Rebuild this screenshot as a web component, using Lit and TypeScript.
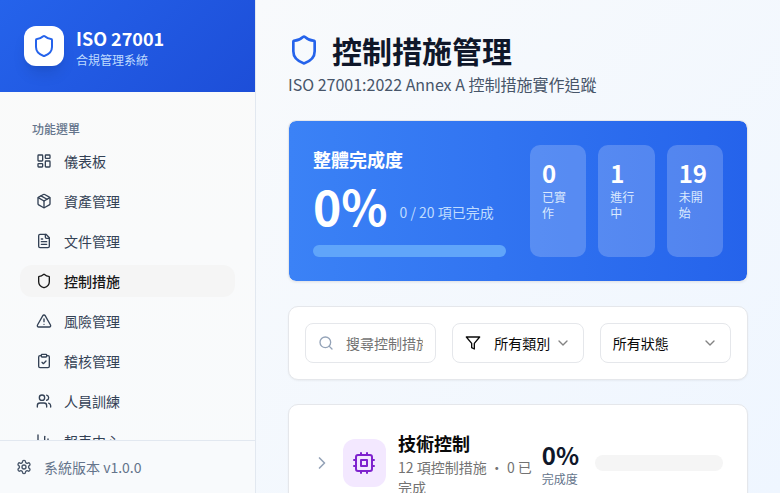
import { LitElement, html, css, svg } from "lit";
import { customElement } from "lit/decorators.js";

const ICONS: Record<string, unknown> = {
  shield: svg`<path d="M20 13c0 5-3.5 7.5-7.66 8.95a1 1 0 0 1-.67-.01C7.5 20.5 4 18 4 13V6a1 1 0 0 1 1-1c2 0 4.5-1.2 6.24-2.72a1.17 1.17 0 0 1 1.52 0C14.51 3.81 17 5 19 5a1 1 0 0 1 1 1z"/>`,
  dashboard: svg`<rect x="3" y="3" width="7" height="9" rx="1"/><rect x="14" y="3" width="7" height="5" rx="1"/><rect x="14" y="12" width="7" height="9" rx="1"/><rect x="3" y="16" width="7" height="5" rx="1"/>`,
  package: svg`<path d="M11 21.73a2 2 0 0 0 2 0l7-4A2 2 0 0 0 21 16V8a2 2 0 0 0-1-1.73l-7-4a2 2 0 0 0-2 0l-7 4A2 2 0 0 0 3 8v8a2 2 0 0 0 1 1.73z"/><path d="M12 22V12"/><path d="M3.3 7 12 12l8.7-5"/><path d="m7.5 4.27 9 5.15"/>`,
  file: svg`<path d="M15 2H6a2 2 0 0 0-2 2v16a2 2 0 0 0 2 2h12a2 2 0 0 0 2-2V7Z"/><path d="M14 2v4a2 2 0 0 0 2 2h4"/><path d="M10 9H8"/><path d="M16 13H8"/><path d="M16 17H8"/>`,
  alert: svg`<path d="m21.73 18-8-14a2 2 0 0 0-3.48 0l-8 14A2 2 0 0 0 4 21h16a2 2 0 0 0 1.73-3"/><path d="M12 9v4"/><path d="M12 17h.01"/>`,
  clipboard: svg`<rect x="8" y="2" width="8" height="4" rx="1"/><path d="M16 4h2a2 2 0 0 1 2 2v14a2 2 0 0 1-2 2H6a2 2 0 0 1-2-2V6a2 2 0 0 1 2-2h2"/><path d="m9 14 2 2 4-4"/>`,
  users: svg`<path d="M16 21v-2a4 4 0 0 0-4-4H6a4 4 0 0 0-4 4v2"/><circle cx="9" cy="7" r="4"/><path d="M22 21v-2a4 4 0 0 0-3-3.87"/><path d="M16 3.13a4 4 0 0 1 0 7.75"/>`,
  chart: svg`<path d="M3 3v18h18"/><path d="M18 17V9"/><path d="M13 17V5"/><path d="M8 17v-3"/>`,
  gear: svg`<path d="M12.22 2h-.44a2 2 0 0 0-2 2v.18a2 2 0 0 1-1 1.73l-.43.25a2 2 0 0 1-2 0l-.15-.08a2 2 0 0 0-2.73.73l-.22.38a2 2 0 0 0 .73 2.73l.15.1a2 2 0 0 1 1 1.72v.51a2 2 0 0 1-1 1.74l-.15.09a2 2 0 0 0-.73 2.73l.22.38a2 2 0 0 0 2.73.73l.15-.08a2 2 0 0 1 2 0l.43.25a2 2 0 0 1 1 1.73V20a2 2 0 0 0 2 2h.44a2 2 0 0 0 2-2v-.18a2 2 0 0 1 1-1.73l.43-.25a2 2 0 0 1 2 0l.15.08a2 2 0 0 0 2.73-.73l.22-.39a2 2 0 0 0-.73-2.73l-.15-.08a2 2 0 0 1-1-1.74v-.5a2 2 0 0 1 1-1.74l.15-.09a2 2 0 0 0 .73-2.73l-.22-.38a2 2 0 0 0-2.73-.73l-.15.08a2 2 0 0 1-2 0l-.43-.25a2 2 0 0 1-1-1.73V4a2 2 0 0 0-2-2z"/><circle cx="12" cy="12" r="3"/>`,
  filter: svg`<polygon points="22 3 2 3 10 12.46 10 19 14 21 14 12.46 22 3"/>`,
  search: svg`<circle cx="11" cy="11" r="8"/><path d="m21 21-4.3-4.3"/>`,
  down: svg`<path d="m6 9 6 6 6-6"/>`,
  right: svg`<path d="m9 18 6-6-6-6"/>`,
  cpu: svg`<rect x="4" y="4" width="16" height="16" rx="2"/><rect x="9" y="9" width="6" height="6"/><path d="M15 2v2"/><path d="M15 20v2"/><path d="M2 15h2"/><path d="M2 9h2"/><path d="M20 15h2"/><path d="M20 9h2"/><path d="M9 2v2"/><path d="M9 20v2"/>`,
};

const icon = (name: string, cls = "") =>
  html`<svg class="ic ${cls}" viewBox="0 0 24 24" fill="none" stroke="currentColor" stroke-width="2" stroke-linecap="round" stroke-linejoin="round">${ICONS[name]}</svg>`;

const NAV = [
  ["dashboard", "儀表板"],
  ["package", "資產管理"],
  ["file", "文件管理"],
  ["shield", "控制措施"],
  ["alert", "風險管理"],
  ["clipboard", "稽核管理"],
  ["users", "人員訓練"],
  ["chart", "報表中心"],
];

const STATS = [
  ["0", "已實作"],
  ["1", "進行中"],
  ["19", "未開始"],
];

@customElement("app-root")
export class AppRoot extends LitElement {
  static styles = css`
    :host {
      display: flex;
      width: 100%;
      height: 100vh;
      overflow: hidden;
      font-family: "Noto Sans CJK TC", "Noto Sans", sans-serif;
      color: #0a0a0a;
    }
    * { box-sizing: border-box; }
    .ic { width: 16px; height: 16px; flex: none; display: block; }

    .side {
      width: 256px;
      flex: none;
      display: flex;
      flex-direction: column;
      background: linear-gradient(180deg, #fafafa, #f8fafc);
      border-right: 1px solid #e2e8f0;
    }
    .brand {
      height: 92px;
      flex: none;
      display: flex;
      align-items: center;
      gap: 12px;
      padding: 0 24px;
      background: linear-gradient(135deg, #2563eb, #1d4ed8);
    }
    .logo {
      width: 40px;
      height: 40px;
      border-radius: 12px;
      background: #fff;
      color: #2563eb;
      display: flex;
      align-items: center;
      justify-content: center;
      box-shadow: 0 10px 15px -3px rgba(0,0,0,.1), 0 4px 6px -4px rgba(0,0,0,.1);
    }
    .logo .ic { width: 24px; height: 24px; }
    .brand-name { font-size: 18px; line-height: 28px; font-weight: 700; color: #fff; }
    .brand-sub { font-size: 12px; line-height: 16px; color: #bfdbfe; }

    .nav {
      flex: 1;
      min-height: 0;
      overflow: hidden;
      padding: 29px 20px 0;
      display: flex;
      flex-direction: column;
    }
    .nav-label {
      font-size: 12px;
      line-height: 16px;
      font-weight: 500;
      color: #64748b;
      padding-left: 12px;
      margin-bottom: 8px;
    }
    .item {
      height: 32px;
      margin-bottom: 8px;
      flex: none;
      display: flex;
      align-items: center;
      gap: 12px;
      padding-left: 16px;
      border-radius: 12px;
      font-size: 14px;
      color: #334155;
    }
    .item.on { background: #f5f5f5; color: #171717; font-weight: 500; }

    .foot {
      height: 53px;
      flex: none;
      display: flex;
      align-items: center;
      gap: 12px;
      padding-left: 16px;
      border-top: 1px solid #e2e8f0;
      background: #f8fafc;
      color: #475569;
      font-size: 14px;
    }
    .foot span { color: #64748b; }

    .main {
      flex: 1;
      min-width: 0;
      overflow: hidden;
      padding: 32px;
      background: linear-gradient(135deg, #f8fafc, #eff6ff);
      display: flex;
      flex-direction: column;
      gap: 24px;
    }
    .head-row { display: flex; align-items: center; gap: 12px; height: 36px; }
    .head-row .ic { width: 32px; height: 32px; color: #2563eb; }
    h1 { margin: 0; font-size: 30px; line-height: 36px; font-weight: 700; color: #0f172a; }
    .subtitle { margin: 4px 0 0; font-size: 16px; line-height: 24px; color: #475569; }

    .hero {
      flex: none;
      display: grid;
      grid-template-columns: 1fr 1fr;
      gap: 24px;
      padding: 24px;
      border: 1px solid #e5e7eb;
      border-radius: 8px;
      background: linear-gradient(90deg, #3b82f6, #2563eb);
      box-shadow: 0 1px 2px rgba(0,0,0,.05);
      color: #fff;
      background-clip: padding-box;
    }
    .hero-title { font-size: 18px; line-height: 28px; font-weight: 600; margin-bottom: 8px; }
    .hero-row { display: flex; align-items: flex-end; gap: 12px; height: 48px; margin-bottom: 16px; }
    .hero-pct { font-size: 48px; line-height: 48px; font-weight: 700; }
    .hero-count { font-size: 14px; line-height: 20px; color: #bfdbfe; margin-bottom: 7px; }
    .hero-bar { height: 12px; border-radius: 999px; background: #60a5fa; }
    .stats { display: grid; grid-template-columns: repeat(3, 1fr); gap: 12px; }
    .stat { padding: 12px; border-radius: 10px; background: rgba(255,255,255,.2); }
    .stat-n { font-size: 24px; line-height: 32px; font-weight: 700; }
    .stat-l { font-size: 12px; line-height: 16px; color: #dbeafe; }

    .card {
      flex: none;
      background: #fff;
      border: 1px solid #e5e7eb;
      border-radius: 10px;
      box-shadow: 0 1px 2px rgba(0,0,0,.05);
    }
    .filters {
      display: grid;
      grid-template-columns: repeat(3, 1fr);
      gap: 16px;
      padding: 16px;
    }
    .search, .select {
      height: 40px;
      border: 1px solid #e5e7eb;
      border-radius: 8px;
      background: #fff;
      display: flex;
      align-items: center;
      font-size: 14px;
      min-width: 0;
    }
    .search { position: relative; }
    .search .ic { position: absolute; left: 12px; top: 11px; color: #94a3b8; }
    .search input {
      width: 100%;
      height: 100%;
      border: 0;
      outline: 0;
      background: none;
      padding: 0 12px 0 40px;
      font: inherit;
      min-width: 0;
    }
    .search input::placeholder { color: #737373; opacity: 1; }
    .select { padding: 0 12px; color: #0a0a0a; }
    .select .funnel { margin-right: 13px; }
    .select .grow { flex: 1; white-space: nowrap; }
    .select .chev { opacity: .5; }

    .group {
      display: flex;
      align-items: center;
      padding: 24px;
    }
    .ic.toggle { width: 20px; height: 20px; color: #94a3b8; margin: 0 11px 0 -1px; }
    .gicon {
      width: 43px;
      height: 48px;
      flex: none;
      border-radius: 12px;
      padding-right: 1px;
      background: #f3e8ff;
      color: #7e22ce;
      display: flex;
      align-items: center;
      justify-content: center;
      margin-right: 12px;
    }
    .gicon .ic { width: 24px; height: 24px; }
    .gtext { flex: 1; min-width: 0; margin-right: 8px; }
    .gtitle { font-size: 18px; line-height: 28px; font-weight: 600; color: #0a0a0a; }
    .gsub { font-size: 14px; line-height: 20px; color: #737373; }
    .gpct { flex: none; margin-right: 16px; }
    .gpct-n { font-size: 24px; line-height: 32px; font-weight: 700; color: #0f172a; }
    .gpct-l { font-size: 12px; line-height: 16px; color: #64748b; }
    .gbar { width: 128px; height: 16px; flex: none; border-radius: 999px; background: #f5f5f5; }
  `;

  render() {
    return html`
      <aside class="side">
        <div class="brand">
          <div class="logo">${icon("shield")}</div>
          <div>
            <div class="brand-name">ISO 27001</div>
            <div class="brand-sub">合規管理系統</div>
          </div>
        </div>
        <nav class="nav">
          <div class="nav-label">功能選單</div>
          ${NAV.map(
            ([ic, label]) => html`<div class="item ${label === "控制措施" ? "on" : ""}">${icon(ic)}<span>${label}</span></div>`
          )}
        </nav>
        <div class="foot">${icon("gear")}<span>系統版本 v1.0.0</span></div>
      </aside>
      <main class="main">
        <header>
          <div class="head-row">${icon("shield")}<h1>控制措施管理</h1></div>
          <p class="subtitle">ISO 27001:2022 Annex A 控制措施實作追蹤</p>
        </header>
        <section class="hero">
          <div>
            <div class="hero-title">整體完成度</div>
            <div class="hero-row"><span class="hero-pct">0%</span><span class="hero-count">0 / 20 項已完成</span></div>
            <div class="hero-bar"></div>
          </div>
          <div class="stats">
            ${STATS.map(
              ([n, l]) => html`<div class="stat"><div class="stat-n">${n}</div><div class="stat-l">${l}</div></div>`
            )}
          </div>
        </section>
        <section class="card filters">
          <div class="search">${icon("search")}<input placeholder="搜尋控制措施..." /></div>
          <div class="select">${icon("filter", "funnel")}<span class="grow">所有類別</span>${icon("down", "chev")}</div>
          <div class="select"><span class="grow">所有狀態</span>${icon("down", "chev")}</div>
        </section>
        <section class="card group">
          ${icon("right", "toggle")}
          <div class="gicon">${icon("cpu")}</div>
          <div class="gtext">
            <div class="gtitle">技術控制</div>
            <div class="gsub">12 項控制措施 ・ 0 已完成</div>
          </div>
          <div class="gpct">
            <div class="gpct-n">0%</div>
            <div class="gpct-l">完成度</div>
          </div>
          <div class="gbar"></div>
        </section>
      </main>
    `;
  }
}
